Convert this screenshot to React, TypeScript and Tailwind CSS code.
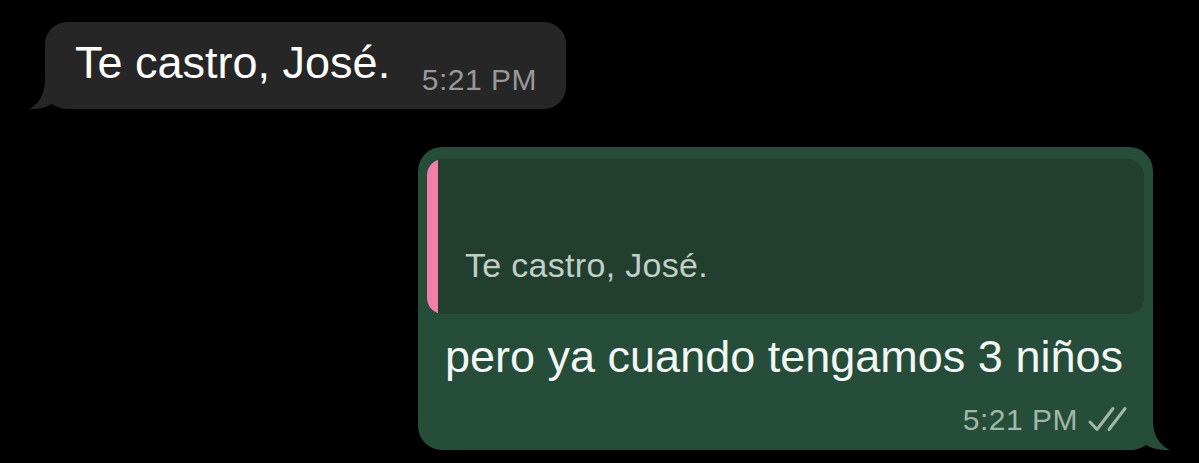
import React from "react";

const font = { fontFamily: '"Liberation Sans", Arial, sans-serif' };

export default function App() {
  return (
    <div
      className="w-[1199px] h-[463px] bg-black overflow-hidden flex flex-col"
      style={font}
    >
      {/* Incoming bubble */}
      <div className="pt-[22px] pl-[45px] flex">
        <div className="relative flex items-start h-[87px] w-[521px] rounded-[22px] bg-[#262626] pl-[30px] pr-[29px] pt-[18px]">
          <svg
            className="absolute left-[-16px] bottom-0"
            width="40"
            height="30"
            viewBox="0 0 40 30"
          >
            <path
              d="M16 0 C16 15 10 25 0 30 C9 30.5 17 28.5 23 25 C28 28.5 33 30 40 30 L40 0 Z"
              fill="#262626"
            />
          </svg>
          <span className="relative text-[45px] leading-none text-white whitespace-nowrap">
            Te castro, José.
          </span>
          <span className="relative ml-auto mt-[25px] text-[30px] leading-none text-[#999999] whitespace-nowrap tracking-[0.5px]">
            5:21 PM
          </span>
        </div>
      </div>

      {/* Outgoing bubble */}
      <div className="mt-[38px] flex justify-end pr-[46px]">
        <div className="relative w-[735px] h-[303px] rounded-[24px] bg-[#264c3a] flex flex-col">
          <svg
            className="absolute right-[-17px] bottom-0"
            width="40"
            height="30"
            viewBox="0 0 40 30"
          >
            <path
              d="M23 0 C23 15 29 25 40 30 C31 30.5 22 28.5 16 25 C11 28.5 6 30 0 30 L0 0 Z"
              fill="#264c3a"
            />
          </svg>

          {/* Quote */}
          <div className="relative mt-[12px] ml-[9px] mr-[9px] h-[155px] rounded-[16px] bg-[#213e2f] overflow-hidden flex">
            <div className="w-[11px] bg-[#f07fa9]" />
            <div className="flex-1 flex items-end pl-[27px] pb-[32px]">
              <span className="text-[34px] leading-none text-[#c1cfc6] whitespace-nowrap tracking-[0.3px]">
                Te castro, José.
              </span>
            </div>
          </div>

          {/* Main text */}
          <div className="relative mt-[20px] pl-[27px]">
            <span className="text-[45px] leading-none text-[#f2f7f4] whitespace-nowrap">
              pero ya cuando tengamos 3 niños
            </span>
          </div>

          {/* Time row */}
          <div className="relative mt-[26px] flex justify-end items-start pr-[24px]">
            <span className="text-[30px] leading-none text-[#9fb8aa] whitespace-nowrap tracking-[0.5px]">
              5:21 PM
            </span>
            <svg
              className="ml-[9px] mt-[1px]"
              width="42"
              height="26"
              viewBox="0 0 42 26"
              fill="none"
              stroke="#9fb8aa"
              strokeWidth="3"
              strokeLinecap="round"
              strokeLinejoin="round"
            >
              <path d="M3 16 L10 23.5 L26 2.5" />
              <path d="M22 23.5 L38 2.5" />
            </svg>
          </div>
        </div>
      </div>
    </div>
  );
}
